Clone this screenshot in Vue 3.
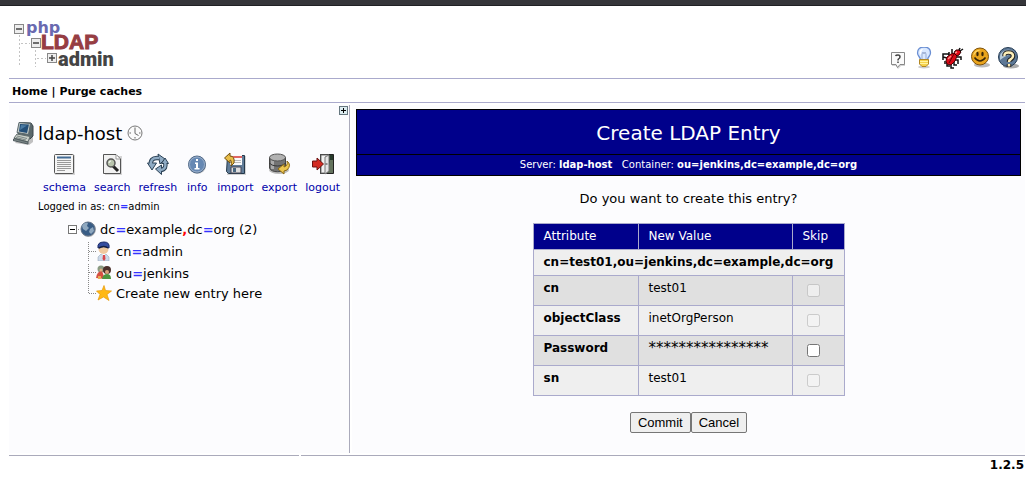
<script setup>
import { ref } from 'vue'

const tools = ['schema', 'search', 'refresh', 'info', 'import', 'export', 'logout']
const links = ['hint', 'light', 'bug', 'smile', 'help']
const rows = ref([
  { name: 'cn', value: 'test01', locked: true, skip: false },
  { name: 'objectClass', value: 'inetOrgPerson', locked: true, skip: false },
  { name: 'Password', value: '****************', locked: false, skip: false },
  { name: 'sn', value: 'test01', locked: true, skip: false },
])
</script>

<template>
  <div class="page">
    <div class="topbar"></div>
    <header class="head">
      <svg class="logo" width="104" height="52" viewBox="0 0 104 52" role="img" aria-label="phpLDAPadmin">
        <g stroke="#c4c4c4" stroke-dasharray="2 2" fill="none">
          <path d="M6.500 18V50M22.500 33V50M8 26.500H17M24 41.500H33" />
        </g>
        <g fill="#eee" stroke="#888">
          <rect x="1.500" y="7.500" width="9" height="9" />
          <rect x="18.500" y="21.500" width="9" height="9" />
          <rect x="34.500" y="36.500" width="9" height="9" />
        </g>
        <path d="M3 12H9M20 26H26M36 41H42M39 38V44" stroke="#444" stroke-width="1.500" />
        <text x="13" y="16" class="php">php</text>
        <text x="28" y="32" class="ldap">LDAP</text>
        <text x="45" y="49" class="adm">admin</text>
      </svg>
      <nav class="links" aria-label="Support">
        <a v-for="l in links" :key="l" href="#" :aria-label="l">
          <svg v-if="l === 'hint'" width="22" height="22" viewBox="0 0 22 22">
            <path d="M6 6H19V19H15L12 22L10 19H6Z" fill="#aaa" opacity=".5" />
            <path d="M5.500 5.500H18.500V17.500H14L11.500 20.500L10 17.500H5.500Z" fill="#fafafa" stroke="#888" />
            <path d="M9.500 9Q10 8 12 8Q14 8 14 10Q14 11 12.500 12Q12 12.500 12 13.500M12 14.500V16" fill="none" stroke="#444" stroke-width="1.500" />
          </svg>
          <svg v-else-if="l === 'light'" width="22" height="22" viewBox="0 0 22 22">
            <ellipse cx="10" cy="20" rx="6" ry="1.500" fill="#ccc" />
            <g transform="translate(-1 -1)">
              <path d="M4.500 7C4.500 3 7 1 11 1S17.500 3 17.500 7C17.500 10 14.500 11 14.500 14H7.500C7.500 11 4.500 10 4.500 7Z" fill="#d9e8ff" stroke="#6b8fd3" stroke-width="1.300" />
              <path d="M6.500 7Q6.500 3 10 3Q8 5 8 9Z" fill="#fff" />
              <path d="M9 13V8L10 6L11 8L12 6L13 8V13" fill="none" stroke="#9badd0" />
              <path d="M6.500 13.500H15.500V18L13 20.500H9L6.500 18Z" fill="#f6d34a" stroke="#b18724" />
              <path d="M7 15.500H15M7 17.500H15" stroke="#fff3a0" />
            </g>
          </svg>
          <svg v-else-if="l === 'bug'" width="22" height="22" viewBox="0 0 22 22">
            <path d="M1 10V7H6L8 9M1 13V10L5 11M10 2V6L12 8M7 5V8M13 4V7M17 3L18 1M18 4L21 2M15 10H19V13M13 13H16V17M12 15V18H15M9 17V21H12M5 16V19H8M3 14V17" fill="none" stroke="#111" stroke-width="1.500" />
            <path d="M4 14L5 10L9 7L13 6L15 9L13 14L9 18L5 17Z" fill="#dc0815" stroke="#500004" />
            <path d="M12 6L14 3H17L19 5L17 8L15 9Z" fill="#e30716" stroke="#300002" />
            <path d="M7 16L12 7" stroke="#600006" /><path d="M6 12L9 9M13 6L15 5" stroke="#ff8f88" stroke-width="1.500" />
          </svg>
          <svg v-else-if="l === 'smile'" width="22" height="22" viewBox="0 0 22 22">
            <ellipse cx="12" cy="18" rx="8" ry="2.500" fill="#bbb" />
            <circle cx="10" cy="9.500" r="8.500" fill="#e9a41c" stroke="#7e520c" />
            <path d="M3.500 7Q6 2 11 3Q6 4 3.500 9" fill="#ffd768" />
            <ellipse cx="7.500" cy="7" rx="1.200" ry="2.200" fill="#382507" /><ellipse cx="12.500" cy="7" rx="1.200" ry="2.200" fill="#382507" />
            <path d="M4.500 10.500Q10 17.500 15.500 10.500" fill="none" stroke="#382507" stroke-width="1.500" />
          </svg>
          <svg v-else width="22" height="22" viewBox="0 0 22 22">
            <ellipse cx="13" cy="19" rx="8" ry="2.500" fill="#aaa" />
            <circle cx="10" cy="10" r="9.500" fill="#5d7896" stroke="#263c54" />
            <path d="M2 13Q1 5 8 3Q15 2 17 7Q9 7 2 13" fill="#b9ccda" />
            <path d="M6.500 9Q6 5.500 10.500 5.500Q15 5.500 15 9Q15 11 12.500 12.500Q11 13 11 15M11 17V20" fill="none" stroke="#222" stroke-width="4.500" />
            <path d="M6.500 9Q6 5.500 10.500 5.500Q15 5.500 15 9Q15 11 12.500 12.500Q11 13 11 15M11 17V19.500" fill="none" stroke="#fff0b8" stroke-width="2.500" />
          </svg>
        </a>
      </nav>
    </header>
    <nav class="menu"><a href="#">Home</a> | <a href="#">Purge caches</a></nav>

    <main class="body">
      <aside class="side">
        <button class="expand" aria-label="Expand panel">
          <svg width="9" height="9" viewBox="0 0 9 9"><rect x=".5" y=".5" width="8" height="8" fill="#dcecf0" stroke="#66777f" /><path d="M2 4.500H7M4.500 2V7" stroke="#000" /></svg>
        </button>
        <div class="host">
          <svg width="22" height="24" viewBox="0 0 22 24">
            <path d="M2 22L16 24L20 21V9L18 3Z" fill="#777" opacity=".45" />
            <path d="M7 1.500L18 2L20 5V15L17 18L5 14Z" fill="#59676b" stroke="#3c474c" />
            <path d="M6 1.500L17.500 2.500L15.500 13.500L4 11.500Z" fill="#c3cbc8" stroke="#59676c" />
            <path d="M7 3L16 3.500L14 12L6 10.500Z" fill="#234f78" /><path d="M8 4L14 4.500L7 9Z" fill="#4a7ba3" />
            <path d="M4 13L17 15.500L15 21L1 17Z" fill="#cad0c9" stroke="#626e6e" />
            <path d="M4 15L14 17.500M3 16.500L13 19" stroke="#7d8888" />
            <path d="M1 17.500L15 21V23L0 19.500Z" fill="#7b8787" stroke="#505b5f" />
          </svg>
          <span>ldap-host</span>
          <svg width="16" height="16" viewBox="0 0 16 16"><circle cx="8" cy="8" r="7" fill="#fafafa" stroke="#777" /><path d="M8 2.500V8.500L11.500 10.500M2.500 8H4M12 8H13.500M8 12V13.500" fill="none" stroke="#666" /></svg>
        </div>
        <div class="tools">
          <a v-for="t in tools" :key="t" href="#">
            <svg v-if="t === 'schema'" width="24" height="24" viewBox="0 0 24 24">
              <path d="M3 3H23V23H3Z" fill="#bbb" opacity=".6" /><rect x="2.500" y="2.500" width="19" height="19" rx="1" fill="#f5f5f5" stroke="#555" />
              <path d="M5 5.500H19" stroke="#426b94" stroke-width="2" /><path d="M5 8.500H19M5 10.500H19M5 12.500H19M5 14.500H19M5 16.500H19M5 18.500H13" stroke="#999" />
            </svg>
            <svg v-else-if="t === 'search'" width="24" height="24" viewBox="0 0 24 24">
              <path d="M5 4H22V23H5Z" fill="#bbb" opacity=".6" /><path d="M3.500 2.500H16L20.500 7V21.500H3.500Z" fill="#f1f1f1" stroke="#555" /><path d="M16 3V7H20" fill="#fff" stroke="#999" />
              <path d="M13 14L18 19" stroke="#222" stroke-width="3" /><circle cx="11" cy="11" r="4" fill="#b8c4ac" stroke="#555" stroke-width="1.500" /><path d="M9 11Q9 9 11 9" stroke="#fff" fill="none" />
            </svg>
            <svg v-else-if="t === 'refresh'" width="24" height="24" viewBox="0 0 24 24">
              <g fill="none" stroke="#2c4256" stroke-width="4.500"><path d="M5 13Q4 6 11 6H13" /><path d="M19 10Q21 17 15 18" /></g>
              <g fill="#8fabc4" stroke="#2c4256"><path d="M12 2L19 7L14 12Z" /><path d="M1.500 11H10.500L6 18Z" /><path d="M15.500 22.500V13L9.500 17Z" /><path d="M15.500 11.500L19 6L22.500 11.500Z" /></g>
              <g fill="none" stroke="#8fabc4" stroke-width="2.500"><path d="M5 13Q4 6 11 6H13" /><path d="M19 10Q21 17 15 18" /></g>
            </svg>
            <svg v-else-if="t === 'info'" width="24" height="24" viewBox="0 0 24 24">
              <circle cx="12.500" cy="13.500" r="8.500" fill="#aaa" opacity=".6" /><circle cx="12" cy="12.500" r="8.500" fill="#6688b3" stroke="#526a87" /><circle cx="12" cy="12.500" r="7.500" fill="none" stroke="#9aafca" />
              <path d="M11 7H13V9H11ZM10 10.500H13V16H14.500V17.500H9.500V16H11V12H10Z" fill="#fff" />
            </svg>
            <svg v-else-if="t === 'import'" width="24" height="24" viewBox="0 0 24 24">
              <path d="M5 4H23V23H4Z" fill="#aaa" opacity=".5" /><path d="M4.500 3.500H21.500V21.500H5.500L3.500 19.500Z" fill="#617c98" stroke="#24394b" />
              <path d="M7 3H19V13H7Z" fill="#fafafa" /><path d="M7 4H19V6H7Z" fill="#df6664" /><path d="M8 8.500H18M8 10.500H18" stroke="#bbb" />
              <path d="M8 15H18V21H8Z" fill="#ddd" stroke="#445" /><path d="M10 16H13V20H10Z" fill="#486680" />
              <path d="M1.500 6L7 1V4Q12 4 11 11L8 14Q9 8 7 8V11Z" fill="#e8bd49" stroke="#72500e" />
            </svg>
            <svg v-else-if="t === 'export'" width="24" height="24" viewBox="0 0 24 24">
              <ellipse cx="12" cy="18" rx="10" ry="4" fill="#bbb" />
              <path d="M2.500 5.500V16C4 21 17 21 18.500 16V5.500Z" fill="#737373" stroke="#444" /><path d="M4 8V17H7V9Z" fill="#aaa" />
              <path d="M2.500 11C5 15 16 15 18.500 11" fill="none" stroke="#333" /><ellipse cx="10.500" cy="5.500" rx="8" ry="3.500" fill="#b2b2b2" stroke="#555" />
              <path d="M20 9Q25 13 20 18L17 19V22L11 17L17 12V15Q21 14 20 9Z" fill="#edc64f" stroke="#8a6816" />
            </svg>
            <svg v-else width="24" height="24" viewBox="0 0 24 24">
              <path d="M9.500 2.500H22.500V21.500H9.500Z" fill="#263a2b" stroke="#222" /><path d="M19 8H22V21H17Z" fill="#64735e" />
              <path d="M10 3H18L16 5V21H10Z" fill="#f1f1f1" stroke="#777" /><path d="M14 5L18 3V19L14 22Z" fill="#e6e6e6" stroke="#777" /><path d="M14.500 12H16.500" stroke="#333" />
              <path d="M1.500 9H6V6L12.500 12L6 18V15H1.500Z" fill="#d32b22" stroke="#6d1210" />
            </svg>
            <span>{{ t }}</span>
          </a>
        </div>
        <div class="login">Logged in as: cn<b class="eq">=</b>admin</div>
        <ul class="tree">
          <li class="root">
            <svg width="12" height="22" viewBox="0 0 12 22"><rect x=".5" y="7.500" width="8" height="8" fill="#fff" stroke="#777" /><path d="M2 11.500H7" stroke="#000" /><path d="M10 11.500H12" stroke="#888" stroke-dasharray="1 1" /></svg>
            <svg width="16" height="16" viewBox="0 0 16 16"><circle cx="8.500" cy="8.500" r="7.500" fill="#bbb" /><circle cx="8" cy="8" r="7" fill="#385c85" stroke="#637389" /><path d="M2 5Q4 1 8 2L7 5L9 7L6 10L3 8ZM10 8L13 6L14 10L11 13L9 11Z" fill="#8fa8bf" /></svg>
            <a href="#" class="name">dc<b class="eq">=</b>example<b class="comma">,</b>dc<b class="eq">=</b>org (2)</a>
          </li>
          <li>
            <svg width="8" height="22" viewBox="0 0 8 22"><path d="M.5 2V21M1 11.500H8" fill="none" stroke="#888" stroke-dasharray="1 1" /></svg>
            <svg width="16" height="20" viewBox="0 0 16 20"><path d="M2 20V16L5 13H10L13 16V20Z" fill="#ccd9e9" stroke="#8d9cb1" stroke-width=".5" /><path d="M5 12L8 15L10 12V10H5Z" fill="#fff" /><path d="M7 14H9L9.500 18L8 20L6.500 18Z" fill="#d9484c" /><ellipse cx="7.500" cy="8" rx="5" ry="5" fill="#efc99f" /><path d="M2 7Q1 1 8 1Q14 1 13 7Q8 4 2 7Z" fill="#354d9e" stroke="#182968" /><path d="M3 7Q8 4 12 7" stroke="#152040" fill="none" stroke-width="1.500" /></svg>
            <a href="#" class="name">cn<b class="eq">=</b>admin</a>
          </li>
          <li>
            <svg width="8" height="22" viewBox="0 0 8 22"><path d="M.5 2V22M1 10.500H8" fill="none" stroke="#888" stroke-dasharray="1 1" /></svg>
            <svg width="16" height="16" viewBox="0 0 16 16"><circle cx="5" cy="4" r="3.500" fill="#8a9a82" /><circle cx="11" cy="5" r="4" fill="#4c302b" /><path d="M0 13Q1 6 6 6L9 14Z" fill="#d65042" /><path d="M6 14Q7 9 11 9Q15 9 15 14Z" fill="#4c9641" /><circle cx="11" cy="7" r="2" fill="#d7a27a" /><circle cx="5" cy="5" r="1.500" fill="#dfae83" /><path d="M2 11H5V14H2Z" fill="#e9ad55" /></svg>
            <a href="#" class="name">ou<b class="eq">=</b>jenkins</a>
          </li>
          <li class="last">
            <svg width="8" height="18" viewBox="0 0 8 18"><path d="M.5 0V9.500H8" fill="none" stroke="#888" stroke-dasharray="1 1" /></svg>
            <svg width="16" height="16" viewBox="0 0 16 16"><path d="M8 .5L9.500 5.500L15.500 6L11 9.500L13 15.500L7.500 12L2 15L4 9.500L.5 6L6 5.500Z" fill="#ffb814" stroke="#e79a08" stroke-width=".7" /></svg>
            <a href="#" class="name">Create new entry here</a>
          </li>
        </ul>
      </aside>

      <section class="content">
        <div class="title">
          <h1>Create LDAP Entry</h1>
          <p>Server: <b>ldap-host</b> &nbsp; Container: <b>ou=jenkins,dc=example,dc=org</b></p>
        </div>
        <p class="question">Do you want to create this entry?</p>
        <form @submit.prevent>
          <table>
            <thead>
              <tr><th class="attribute">Attribute</th><th class="value">New Value</th><th class="skip">Skip</th></tr>
            </thead>
            <tbody>
              <tr class="dn"><td colspan="3"><b>cn=test01,ou=jenkins,dc=example,dc=org</b></td></tr>
              <tr v-for="r in rows" :key="r.name" class="attr">
                <td><label :for="'skip-' + r.name"><b>{{ r.name }}</b></label></td>
                <td :class="{ secret: !r.locked }">{{ r.value }}</td>
                <td><input :id="'skip-' + r.name" v-model="r.skip" type="checkbox" :disabled="r.locked" /></td>
              </tr>
            </tbody>
          </table>
          <div class="actions"><button type="submit">Commit</button><button type="button">Cancel</button></div>
        </form>
      </section>
    </main>
    <footer class="foot"><span></span><span class="version">1.2.5</span></footer>
  </div>
</template>

<style>
body { background: #fff; }
</style>

<style scoped>
.page { font-family: "DejaVu Sans", Verdana, sans-serif; font-size: 13px; color: #000; }
.page * { box-sizing: border-box; }
a { color: inherit; text-decoration: none; }
svg { display: block; flex: none; }
.topbar { height: 6px; background: #35363a; border-bottom: 1px solid #202124; }
.head { display: flex; justify-content: space-between; align-items: flex-end; height: 73px; margin: 0 1px 0 9px; padding: 0 5px 9px 4px; border-bottom: 1px solid #aaaacc; }
.php { font: bold 16px "DejaVu Sans", sans-serif; fill: #6a6ab0; }
.ldap { font: bold 21px "Liberation Sans", Arial, sans-serif; fill: #963d43; stroke: #963d43; stroke-width: 1px; }
.adm { font: 900 20px Roboto, "Liberation Sans", sans-serif; fill: #444; }
.links { display: flex; gap: 6px; }
.menu { height: 24px; margin: 0 1px 0 9px; padding-left: 3px; border-bottom: 1px solid #aaaacc; font-size: 11px; font-weight: bold; line-height: 25px; }
.body { display: flex; gap: 2px; margin: 2px 1px 2px 9px; min-height: 348px; }
.side { position: relative; flex: 0 0 341px; background: #fcfcfe; border-right: 1px solid #aaaabb; padding: 15px 0 0 4px; }
.expand { position: absolute; top: 1px; right: 1px; padding: 0; border: 0; background: none; }
.host { display: flex; align-items: center; height: 26px; font-size: 18px; }
.host span { margin: 0 5px 0 3px; }
.tools { display: flex; gap: 8px; margin: 6px 0 0 30px; font-size: 11px; line-height: 14px; color: #0000aa; }
.tools a { display: flex; flex-direction: column; align-items: center; gap: 5px; }
.login { margin: 5px 0 0 25px; font-size: 10px; line-height: 14px; }
.eq { color: #3333ff; }
.comma { color: #ff0000; }
.tree { list-style: none; margin: 4px 0 0 55px; padding: 0; font-size: 13px; }
.tree li { display: flex; align-items: center; height: 22px; margin-left: 20px; }
.tree .root { height: 22px; margin-left: 0; }
.tree .last { height: 18px; }
.name { margin-left: 4px; }
.content { flex: 1; background: #fcfcfe; padding: 4px; }
.title { border: 1px solid #000; background: #00008b; color: #fff; text-align: center; }
.title h1 { margin: 0; height: 45px; line-height: 46px; font-size: 20px; font-weight: normal; border-bottom: 1px solid #000; }
.title p { margin: 0; font-size: 10px; line-height: 20px; }
.question { margin: 15px 0 16px; line-height: 16px; font-size: 13px; text-align: center; }
table { margin: 0 auto; border-collapse: collapse; font-size: 12px; }
th, td { border: 1px solid #aaaacc; text-align: left; vertical-align: top; padding: 5px 10px; line-height: 15px; }
th { background: #00008b; color: #fff; font-weight: normal; }
.attribute { width: 105px; }
.value { width: 154px; }
.skip { width: 52px; padding-right: 0; }
tr { background: #efefef; }
.attr:nth-child(even) { background: #e0e0e0; }
.attr td { height: 30px; }
.secret { font-size: 15px; }
input { display: block; width: 13px; height: 13px; margin: 3px 0 0 4px; }
.actions { display: flex; justify-content: center; margin-top: 16px; }
.actions button { height: 21px; padding: 0 7px; border: 1px solid #767676; border-radius: 2px; background: #efefef; color: #000; font: 13px "Liberation Sans", Arial, sans-serif; }
.foot { display: flex; gap: 2px; margin: 0 1px 0 9px; font-size: 12px; font-weight: bold; }
.foot span { flex: 0 0 290px; border-top: 1px solid #aaaabb; }
.foot .version { flex: 1; padding: 1px 1px 0 0; line-height: 16px; text-align: right; }
</style>
